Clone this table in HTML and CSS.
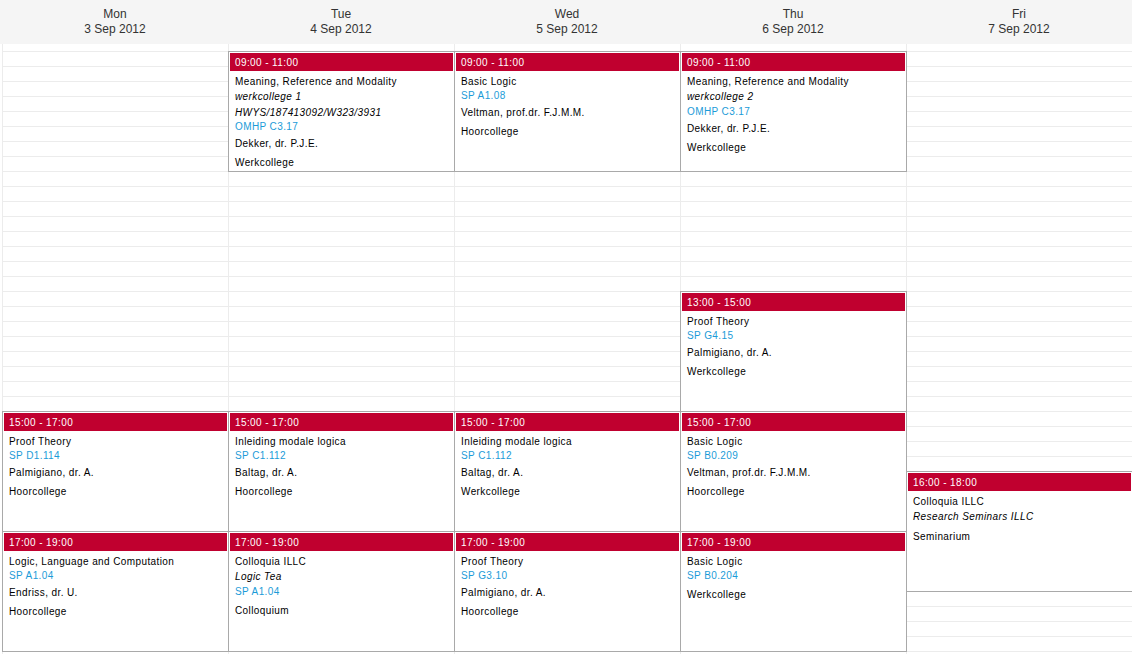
FILE: index.html
```html
<!DOCTYPE html>
<html lang="en">
<head>
    <meta charset="UTF-8">
    <title>Rooster week 36</title>
    <link rel="stylesheet" href="styles.css">
</head>
<body>
    <div class="days">
        <div class="day-head">Mon<br>3 Sep 2012</div>
        <div class="day-head">Tue<br>4 Sep 2012</div>
        <div class="day-head">Wed<br>5 Sep 2012</div>
        <div class="day-head">Thu<br>6 Sep 2012</div>
        <div class="day-head">Fri<br>7 Sep 2012</div>
    </div>

    <div class="grid">
        <div class="col c1"></div>
        <div class="col c2"></div>
        <div class="col c3"></div>
        <div class="col c4"></div>
        <div class="col c5"></div>

        <!-- tuesday -->
        <div class="event c2 r9">
            <div class="when">09:00 - 11:00</div>
            <div class="info">
                <div class="title">Meaning, Reference and Modality</div>
                <div class="sub">werkcollege 1</div>
                <div class="sub">HWYS/187413092/W323/3931</div>
                <div class="room">OMHP C3.17</div>
                <div class="lect">Dekker, dr. P.J.E.</div>
                <div class="kind">Werkcollege</div>
            </div>
        </div>

        <!-- wednesday -->
        <div class="event c3 r9">
            <div class="when">09:00 - 11:00</div>
            <div class="info">
                <div class="title">Basic Logic</div>
                <div class="room">SP A1.08</div>
                <div class="lect">Veltman, prof.dr. F.J.M.M.</div>
                <div class="kind">Hoorcollege</div>
            </div>
        </div>

        <!-- thursday -->
        <div class="event c4 r9">
            <div class="when">09:00 - 11:00</div>
            <div class="info">
                <div class="title">Meaning, Reference and Modality</div>
                <div class="sub">werkcollege 2</div>
                <div class="room">OMHP C3.17</div>
                <div class="lect">Dekker, dr. P.J.E.</div>
                <div class="kind">Werkcollege</div>
            </div>
        </div>

        <div class="event c4 r13">
            <div class="when">13:00 - 15:00</div>
            <div class="info">
                <div class="title">Proof Theory</div>
                <div class="room">SP G4.15</div>
                <div class="lect">Palmigiano, dr. A.</div>
                <div class="kind">Werkcollege</div>
            </div>
        </div>

        <!-- 15:00 -->
        <div class="event c1 r15">
            <div class="when">15:00 - 17:00</div>
            <div class="info">
                <div class="title">Proof Theory</div>
                <div class="room">SP D1.114</div>
                <div class="lect">Palmigiano, dr. A.</div>
                <div class="kind">Hoorcollege</div>
            </div>
        </div>

        <div class="event c2 r15">
            <div class="when">15:00 - 17:00</div>
            <div class="info">
                <div class="title">Inleiding modale logica</div>
                <div class="room">SP C1.112</div>
                <div class="lect">Baltag, dr. A.</div>
                <div class="kind">Hoorcollege</div>
            </div>
        </div>

        <div class="event c3 r15">
            <div class="when">15:00 - 17:00</div>
            <div class="info">
                <div class="title">Inleiding modale logica</div>
                <div class="room">SP C1.112</div>
                <div class="lect">Baltag, dr. A.</div>
                <div class="kind">Werkcollege</div>
            </div>
        </div>

        <div class="event c4 r15">
            <div class="when">15:00 - 17:00</div>
            <div class="info">
                <div class="title">Basic Logic</div>
                <div class="room">SP B0.209</div>
                <div class="lect">Veltman, prof.dr. F.J.M.M.</div>
                <div class="kind">Hoorcollege</div>
            </div>
        </div>

        <div class="event c5 r16">
            <div class="when">16:00 - 18:00</div>
            <div class="info">
                <div class="title">Colloquia ILLC</div>
                <div class="sub">Research Seminars ILLC</div>
                <div class="kind">Seminarium</div>
            </div>
        </div>

        <!-- 17:00 -->
        <div class="event c1 r17">
            <div class="when">17:00 - 19:00</div>
            <div class="info">
                <div class="title">Logic, Language and Computation</div>
                <div class="room">SP A1.04</div>
                <div class="lect">Endriss, dr. U.</div>
                <div class="kind">Hoorcollege</div>
            </div>
        </div>

        <div class="event c2 r17">
            <div class="when">17:00 - 19:00</div>
            <div class="info">
                <div class="title">Colloquia ILLC</div>
                <div class="sub">Logic Tea</div>
                <div class="room">SP A1.04</div>
                <div class="kind">Colloquium</div>
            </div>
        </div>

        <div class="event c3 r17">
            <div class="when">17:00 - 19:00</div>
            <div class="info">
                <div class="title">Proof Theory</div>
                <div class="room">SP G3.10</div>
                <div class="lect">Palmigiano, dr. A.</div>
                <div class="kind">Hoorcollege</div>
            </div>
        </div>

        <div class="event c4 r17">
            <div class="when">17:00 - 19:00</div>
            <div class="info">
                <div class="title">Basic Logic</div>
                <div class="room">SP B0.204</div>
                <div class="kind">Werkcollege</div>
            </div>
        </div>
    </div>
</body>
</html>
```

FILE: styles.css
```css
/* General */
* {
    box-sizing: border-box;
}

body {
    margin: 0;
    font-family: "Liberation Sans", Arial, sans-serif;
    background: #fff;
    color: #000;
    height: 654px;
    overflow: hidden;
}

/* Day header */
.days {
    display: grid;
    grid-template-columns: repeat(5, 226px);
    padding-left: 2px;
    height: 44px;
    background: #f5f5f5;
}

.day-head {
    text-align: center;
    font-size: 12px;
    line-height: 15px;
    padding-top: 7px;
    color: #333;
}

/* Time grid: 15 minute slots of 15px */
.grid {
    display: grid;
    grid-template-columns: repeat(5, 226px);
    grid-template-rows: 7px repeat(44, 15px);
    margin-left: 2px;
    background-image: linear-gradient(#ececec 1px, transparent 1px);
    background-size: 100% 15px;
    background-position: 0 7px;
}

.col {
    grid-row: 1 / -1;
    border-left: 1px solid #ececec;
}

.c1 { grid-column: 1; }
.c2 { grid-column: 2; }
.c3 { grid-column: 3; }
.c4 { grid-column: 4; }
.c5 { grid-column: 5; }

.r9 { grid-row: 2 / span 8; }
.r13 { grid-row: 18 / span 8; }
.r15 { grid-row: 26 / span 8; }
.r16 { grid-row: 30 / span 8; }
.r17 { grid-row: 34 / span 8; }

/* Events */
.event {
    margin: 0 -1px -1px 0;
    border: 1px solid #a9a9a9;
    padding: 1px;
    background: #fff;
    overflow: hidden;
    font-size: 10px;
    letter-spacing: 0.4px;
}

.when {
    height: 18px;
    line-height: 20px;
    padding-left: 5px;
    overflow: hidden;
    background: #c0002f;
    color: #fff;
}

.info {
    padding: 4px 5px 0;
}

.title {
    line-height: 14px;
}

.sub {
    font-style: italic;
    line-height: 15.5px;
}

.room {
    line-height: 14px;
    color: #1b9bd8;
}

.lect {
    margin-top: 3px;
    line-height: 14px;
}

.kind {
    margin-top: 5px;
    line-height: 14px;
}
```
